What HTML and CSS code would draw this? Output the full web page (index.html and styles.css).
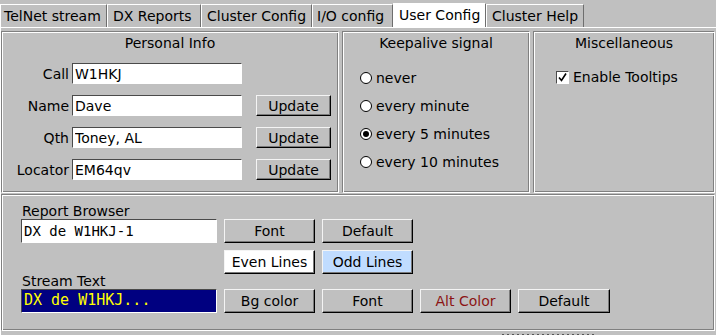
FILE: index.html
```html
<!DOCTYPE html>
<html lang="en">
<head>
    <meta charset="UTF-8">
    <title>User Config</title>
    <link rel="stylesheet" href="styles.css">
</head>
<body>
    <div class="tabs">
        <div class="tab t-telnet">TelNet stream</div>
        <div class="tab t-dx">DX Reports</div>
        <div class="tab t-cluster">Cluster Config</div>
        <div class="tab t-io">I/O config</div>
        <div class="tab t-user active">User Config</div>
        <div class="tab t-help">Cluster Help</div>
    </div>

    <div class="panel">
        <div class="top-row">
            <div class="frame personal">
                <div class="frame-title">Personal Info</div>
                <div class="fields">
                    <div class="field">
                        <label>Call</label>
                        <input class="text-in" type="text" value="W1HKJ">
                    </div>
                    <div class="field">
                        <label>Name</label>
                        <input class="text-in" type="text" value="Dave">
                        <button class="btn upd">Update</button>
                    </div>
                    <div class="field">
                        <label>Qth</label>
                        <input class="text-in" type="text" value="Toney, AL">
                        <button class="btn upd">Update</button>
                    </div>
                    <div class="field">
                        <label>Locator</label>
                        <input class="text-in" type="text" value="EM64qv">
                        <button class="btn upd">Update</button>
                    </div>
                </div>
            </div>

            <div class="frame keepalive">
                <div class="frame-title">Keepalive signal</div>
                <div class="radios">
                    <label class="radio"><span class="dot"></span>never</label>
                    <label class="radio"><span class="dot"></span>every minute</label>
                    <label class="radio"><span class="dot on"></span>every 5 minutes</label>
                    <label class="radio"><span class="dot"></span>every 10 minutes</label>
                </div>
            </div>

            <div class="frame misc">
                <div class="frame-title">Miscellaneous</div>
                <label class="check">
                    <span class="box">
                        <svg width="11" height="11" viewBox="0 0 11 11"><path d="M2 5.5 L4.5 8.5 L9 1.5" fill="none" stroke="#000" stroke-width="1.6"/></svg>
                    </span>Enable Tooltips
                </label>
            </div>
        </div>

        <div class="frame colors">
            <div class="caption">Report Browser</div>
            <div class="crow">
                <div class="sample report">DX de W1HKJ-1</div>
                <button class="btn">Font</button>
                <button class="btn">Default</button>
            </div>
            <div class="crow second">
                <div class="spacer"></div>
                <button class="btn even">Even Lines</button>
                <button class="btn odd">Odd Lines</button>
            </div>
            <div class="caption short">Stream Text</div>
            <div class="crow">
                <div class="sample stream">DX de W1HKJ...</div>
                <button class="btn">Bg color</button>
                <button class="btn">Font</button>
                <button class="btn alt">Alt Color</button>
                <button class="btn wide">Default</button>
            </div>
        </div>
        <div class="grip"></div>
    </div>
</body>
</html>
```

FILE: styles.css
```css
body {
    margin: 0;
    background-color: #c0c0c0;
    font-family: "DejaVu Sans", sans-serif;
    font-size: 14px;
    color: #000;
    width: 716px;
    height: 335px;
    overflow: hidden;
}
.tabs {
    display: flex;
    align-items: flex-end;
    height: 27px;
}
.tab {
    box-sizing: border-box;
    height: 23px;
    line-height: 22px;
    padding: 0 0 0 3px;
    border-top: 1px solid #fff;
    border-left: 1px solid #fff;
    border-right: 1px solid #6e6e6e;
    white-space: nowrap;
}
/* tab widths as fltk sizes them */
.t-telnet { width: 107px; }
.t-dx { width: 94px; padding-left: 5px; }
.t-cluster { width: 111px; padding-left: 5px; }
.t-io { width: 81px; padding-left: 4px; }
.t-user { width: 93px; padding-left: 5px; }
.t-help { width: 98px; padding-left: 5px; }
.tab.active {
    background-color: #fff;
    height: 24px;
    line-height: 23px;
}
.panel {
    border-top: 1px solid #fff;
    border-left: 1px solid #fff;
    padding-top: 3px;
}
.top-row {
    display: flex;
    gap: 3px;
    height: 162px;
}
.frame {
    box-sizing: border-box;
    border: 1px solid;
    border-color: #808080 #fff #fff #808080;
    box-shadow: inset 1px 1px #fff, inset -1px -1px #808080;
    padding-top: 1px;
}
.frame-title {
    text-align: center;
    line-height: 20px;
}
.personal {
    width: 338px;
}
.keepalive {
    width: 188px;
}
.misc {
    width: 182px;
}
.fields {
    margin-top: 10px;
    display: flex;
    flex-direction: column;
    gap: 11px;
    padding-left: 2px;
}
.field {
    display: flex;
    align-items: center;
    height: 21px;
}
.field label {
    width: 65px;
    margin-right: 3px;
    text-align: right;
}
.text-in {
    box-sizing: border-box;
    width: 170px;
    height: 21px;
    margin: 0;
    padding: 0 2px;
    font-family: "DejaVu Sans", sans-serif;
    font-size: 14px;
    color: #000;
    background-color: #fff;
    border: 1px solid;
    border-color: #4a4a4a #fff #fff #4a4a4a;
    outline: none;
}
.btn {
    box-sizing: border-box;
    margin: 0;
    padding: 0;
    height: 24px;
    width: 91px;
    font-family: "DejaVu Sans", sans-serif;
    font-size: 14px;
    color: #000;
    background-color: #c0c0c0;
    border: 1px solid;
    border-color: #f4f4f4 #000 #000 #f4f4f4;
    box-shadow: inset -1px -1px #7a7a7a;
    cursor: pointer;
}
.upd {
    width: 75px;
    height: 21px;
    margin-left: 14px;
}
.radios {
    margin-top: 11px;
    padding-left: 17px;
}
.radio {
    display: flex;
    align-items: center;
    height: 28px;
}
.dot {
    box-sizing: border-box;
    width: 12px;
    height: 12px;
    margin-right: 4px;
    border-radius: 50%;
    border: 1px solid #000;
    background-color: #fff;
    display: flex;
    align-items: center;
    justify-content: center;
}
.dot.on::after {
    content: "";
    width: 6px;
    height: 6px;
    border-radius: 50%;
    background-color: #000;
}
.check {
    display: flex;
    align-items: center;
    height: 16px;
    margin-top: 16px;
    padding-left: 22px;
}
.box {
    box-sizing: border-box;
    width: 13px;
    height: 13px;
    margin-right: 4px;
    background-color: #fff;
    border: 1px solid;
    border-color: #4a4a4a #fff #fff #4a4a4a;
    display: flex;
    align-items: center;
    justify-content: center;
}
.colors {
    width: 714px;
    height: 137px;
    margin-top: 1px;
    padding: 8px 0 0 19px;
}
.caption {
    line-height: 16px;
    height: 16px;
    padding-left: 1px;
}
.caption.short {
    height: 15px;
    line-height: 15px;
}
.crow {
    display: flex;
    gap: 7px;
    height: 24px;
}
.crow.second {
    margin-top: 7px;
}
.spacer {
    width: 196px;
}
.sample {
    box-sizing: border-box;
    width: 196px;
    height: 24px;
    padding: 0 2px;
    font-family: "DejaVu Sans Mono", monospace;
    border: 1px solid;
    border-color: #4a4a4a #fff #fff #4a4a4a;
    white-space: nowrap;
    overflow: hidden;
}
.report {
    background-color: #fff;
    font-size: 14px;
    line-height: 22px;
}
.stream {
    background-color: #000080;
    color: #ffff00;
    font-size: 15px;
    line-height: 21px;
}
.even {
    background-color: #fff;
}
.odd {
    background-color: #c0dcff;
}
.alt {
    color: #8b1414;
}
.wide {
    width: 92px;
}
.grip {
    width: 95px;
    height: 1px;
    margin: 3px 0 0 501px;
    background: repeating-linear-gradient(90deg, #555 0 2px, transparent 2px 5px);
}
```
